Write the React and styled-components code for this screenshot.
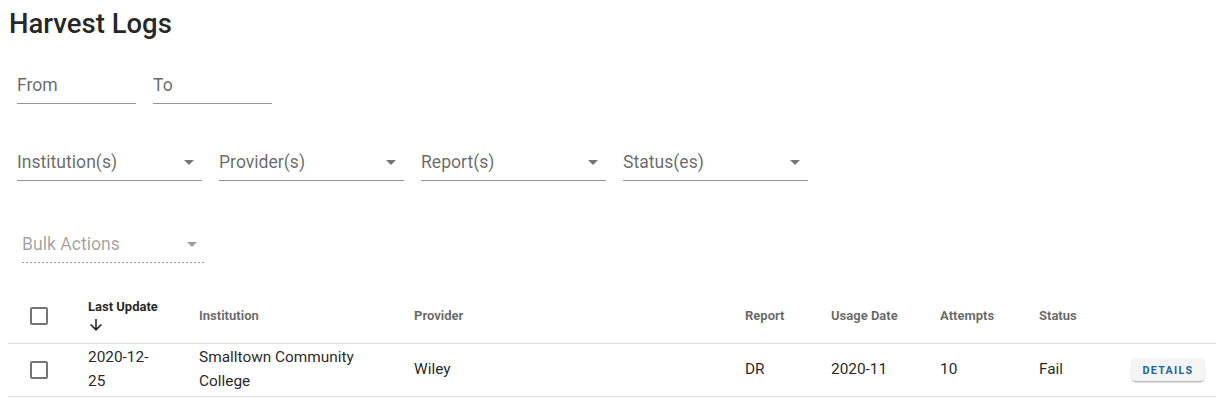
import React from "react";
import styled, { createGlobalStyle } from "styled-components";

const Global = createGlobalStyle`
  html, body { margin: 0; padding: 0; background: #fff; }
  body { font-family: Roboto, "Noto Sans", Arial, sans-serif; color: rgba(0,0,0,0.87); }
  * { box-sizing: border-box; }
`;

const Page = styled.div`
  padding: 8px 0 0 8px;
  width: 1216px;
  overflow: hidden;
`;

const Title = styled.h1`
  margin: 0 0 0 1px;
  font-size: 27.5px;
  line-height: 32px;
  font-weight: 500;
  color: rgba(0,0,0,0.87);
`;

const FilterRow = styled.div`
  display: flex;
  gap: 17px;
  padding-left: 9px;
  margin-top: ${(p) => p.$top}px;
`;

const Field = styled.div`
  width: ${(p) => p.$w}px;
  display: flex;
  align-items: center;
  justify-content: space-between;
  padding: 8px 0;
  margin-left: ${(p) => p.$ml || 0}px;
  border-bottom: 1px solid rgba(0,0,0,0.42);
  ${(p) =>
    p.$disabled &&
    `
    border-bottom: none;
    padding-bottom: 9px;
    background-image: repeating-linear-gradient(to right, rgba(0,0,0,0.38) 0, rgba(0,0,0,0.38) 2px, transparent 2px, transparent 4px);
    background-size: 100% 1px;
    background-repeat: no-repeat;
    background-position: left bottom;
  `}
`;

const Label = styled.span`
  font-size: 17.6px;
  line-height: 20px;
  color: rgba(0,0,0,${(p) => (p.$disabled ? 0.38 : 0.6)});
`;

const Caret = styled.span`
  width: 0;
  height: 0;
  border-left: 5px solid transparent;
  border-right: 5px solid transparent;
  border-top: 5px solid rgba(0,0,0,${(p) => (p.$disabled ? 0.38 : 0.54)});
  margin-right: ${(p) => p.$mr || 8}px;
`;

const Table = styled.table`
  margin-top: 26px;
  width: 1208px;
  border-collapse: collapse;
  table-layout: fixed;
`;

const Th = styled.th`
  text-align: left;
  vertical-align: middle;
  padding: 0 ${(p) => (p.$last ? 0 : 16)}px 0 ${(p) => p.$pl ?? 16}px;
  height: 54px;
  font-size: 13px;
  line-height: 19px;
  font-weight: 700;
  color: rgba(0,0,0,${(p) => (p.$active ? 0.87 : 0.6)});
  border-bottom: 1px solid rgba(0,0,0,0.12);
`;

const Td = styled.td`
  vertical-align: middle;
  padding: 0 ${(p) => (p.$last ? 0 : p.$pr ?? 16)}px 0 ${(p) => p.$pl ?? 16}px;
  height: 53px;
  font-size: 15.4px;
  line-height: 23.5px;
  color: rgba(0,0,0,0.87);
  border-bottom: 1px solid rgba(0,0,0,0.12);
`;

const Check = styled.span`
  display: block;
  width: 18px;
  height: 18px;
  border: 2px solid rgba(0,0,0,0.54);
  border-radius: 2px;
`;

const SortArrow = styled.svg`
  display: block;
  width: 18px;
  height: 18px;
  margin-left: -1px;
`;

const DetailsButton = styled.button`
  width: 72px;
  height: 22px;
  border: none;
  border-radius: 4px;
  background: #f5f5f5;
  box-shadow: 0 2px 2px -1px rgba(0,0,0,0.2), 0 1px 3px 0 rgba(0,0,0,0.12), 0 1px 1px 0 rgba(0,0,0,0.1);
  color: #1b649b;
  font-family: Roboto, sans-serif;
  font-size: 10.7px;
  font-weight: 700;
  letter-spacing: 1.3px;
  padding: 0;
  text-transform: uppercase;
  cursor: pointer;
`;

const cols = [64, 111, 215, 331, 86, 109, 99, 93, 100];

export default function App() {
  return (
    <>
      <Global />
      <Page>
        <Title>Harvest Logs</Title>
        <FilterRow $top={27}>
          <Field $w={119}><Label>From</Label></Field>
          <Field $w={119}><Label>To</Label></Field>
        </FilterRow>
        <FilterRow $top={40}>
          {["Institution(s)", "Provider(s)", "Report(s)", "Status(es)"].map((t) => (
            <Field key={t} $w={185}>
              <Label>{t}</Label>
              <Caret />
            </Field>
          ))}
        </FilterRow>
        <FilterRow $top={45}>
          <Field $w={183} $ml={5} $disabled>
            <Label $disabled>Bulk Actions</Label>
            <Caret $disabled $mr={8} />
          </Field>
        </FilterRow>
        <Table>
          <colgroup>
            {cols.map((w, i) => (
              <col key={i} style={{ width: w }} />
            ))}
          </colgroup>
          <thead>
            <tr>
              <Th $pl={22}><Check /></Th>
              <Th $active>
                Last Update
                <SortArrow viewBox="0 0 24 24">
                  <path fill="rgba(0,0,0,0.87)" d="M11,4H13V16L18.5,10.5L19.92,11.92L12,19.84L4.08,11.92L5.5,10.5L11,16V4Z" />
                </SortArrow>
              </Th>
              <Th>Institution</Th>
              <Th>Provider</Th>
              <Th>Report</Th>
              <Th>Usage Date</Th>
              <Th>Attempts</Th>
              <Th>Status</Th>
              <Th $last></Th>
            </tr>
          </thead>
          <tbody>
            <tr>
              <Td $pl={22}><Check /></Td>
              <Td $pr={22}>2020-12-25</Td>
              <Td>Smalltown Community College</Td>
              <Td>Wiley</Td>
              <Td>DR</Td>
              <Td>2020-11</Td>
              <Td>10</Td>
              <Td>Fail</Td>
              <Td $last><DetailsButton>Details</DetailsButton></Td>
            </tr>
          </tbody>
        </Table>
      </Page>
    </>
  );
}
